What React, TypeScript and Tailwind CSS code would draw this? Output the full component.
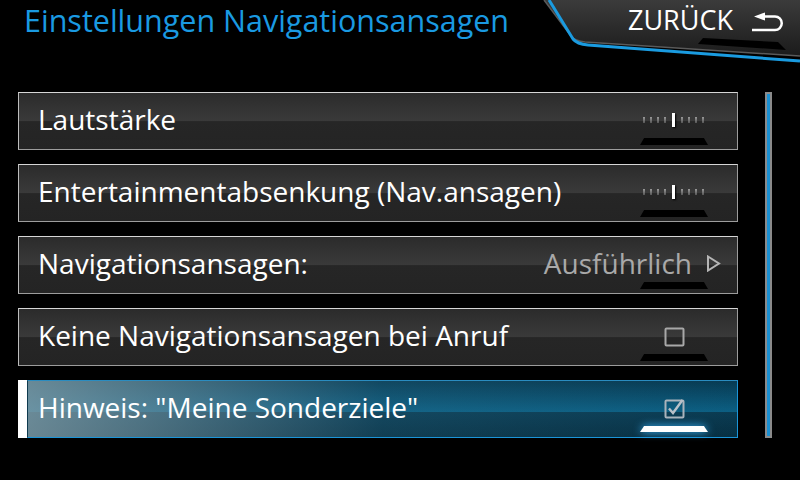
import { ReactNode } from 'react';

const FONT = "font-['Open_Sans',_'DejaVu_Sans',_sans-serif]";

function Notch({ active }: { active?: boolean }) {
  if (active) {
    return (
      <div className="absolute right-[29px] bottom-[5px] drop-shadow-[0_0_4px_#39b6ff]">
        <div className="w-[68px] h-[6px] bg-white [clip-path:polygon(6%_0,94%_0,100%_100%,0_100%)]" />
      </div>
    );
  }
  return (
    <div className="absolute right-[29px] bottom-[4px] w-[68px] h-[7px] bg-black [clip-path:polygon(6%_0,94%_0,100%_100%,0_100%)]" />
  );
}

function SliderIcon() {
  const ticks = [0, 1, 2, 3];
  return (
    <div className="flex items-center gap-[5px]">
      {ticks.map(i => (
        <div key={'l' + i} className="w-[2px] h-[6px] bg-gradient-to-b from-[#9a9a9a] to-[#555]" />
      ))}
      <div className="w-[3px] h-[14px] mx-[1px] bg-white shadow-[1px_1px_2px_#000]" />
      {ticks.map(i => (
        <div key={'r' + i} className="w-[2px] h-[6px] bg-gradient-to-b from-[#9a9a9a] to-[#555]" />
      ))}
    </div>
  );
}

function CheckBox({ checked }: { checked?: boolean }) {
  return (
    <svg width="24" height="22" viewBox="0 0 24 22" className="mr-[49px] mb-[2px]">
      <rect x="1.5" y="3.5" width="18" height="17" rx="1" fill="none" stroke={checked ? '#aab3bb' : '#a8a8a8'} strokeWidth="2" />
      {checked && <path d="M5 11.5 L9 16 L18.5 3" fill="none" stroke="#b8c0c8" strokeWidth="2.4" />}
    </svg>
  );
}

function Row({ label, right, active }: { label: string; right?: ReactNode; active?: boolean }) {
  if (active) {
    return (
      <div className="flex h-[58px]">
        <div className="w-[9px] bg-white" />
        <div className="relative flex-1 flex items-center border border-[#1b95d8] border-l-[#0f3a4e] border-t-[#2a8cc0] bg-[linear-gradient(to_bottom,#073a52_0%,#0c5f83_55%,#0a3b52_56%,#072f42_100%)]">
          <div className="absolute inset-0 bg-gradient-to-r from-[#8aa4ae]/75 via-[#3a7a96]/20 to-transparent" />
          <span className="relative pl-[10px] pb-[4px] text-[28px] leading-[38px] text-white">{label}</span>
          <div className="relative ml-auto flex items-center">{right}</div>
          <Notch active />
        </div>
      </div>
    );
  }
  return (
    <div className="relative flex items-center h-[58px] border border-[#9c9c9c] border-t-[#d6d6d6] border-l-[#bdbdbd] bg-[linear-gradient(to_bottom,#2b2b2b_0%,#3a3a3a_50%,#262626_51%,#242424_100%)]">
      <span className="pl-[19px] pb-[4px] text-[28px] leading-[38px] text-white">{label}</span>
      <div className="ml-auto flex items-center">{right}</div>
      <Notch />
    </div>
  );
}

function HeaderShape() {
  return (
    <svg className="absolute top-0 right-0" width="260" height="70" viewBox="0 0 260 70">
      <defs>
        <linearGradient id="panel" x1="0" y1="0" x2="0" y2="1">
          <stop offset="0" stopColor="#3b3b3b" />
          <stop offset="1" stopColor="#1b1b1b" />
        </linearGradient>
      </defs>
      <path d="M4 0 L31 36 Q35 41 45 42 L260 56 L260 0 Z" fill="url(#panel)" />
      <path d="M4 0 L31 36 Q35 41 45 42 L260 56" fill="none" stroke="#5a5a5a" strokeWidth="1.5" />
      <path d="M158 44 L163 38 L238 42 L246 50 Z" fill="#000" />
      <path d="M9 0 L33 39 Q37 44 48 45 L260 61" fill="none" stroke="#1a9be0" strokeWidth="3" />
    </svg>
  );
}

export default function App() {
  return (
    <div className={`w-[800px] h-[480px] bg-black overflow-hidden ${FONT}`}>
      <header className="relative h-[92px] flex items-start">
        <h1 className="pl-[24px] pt-[0px] text-[30.5px] leading-[40px] text-[#1a9ae2]">
          Einstellungen Navigationsansagen
        </h1>
        <HeaderShape />
        <div className="relative ml-auto mr-[17px] mt-[3px] flex items-center gap-[18px]">
          <span className="text-[27px] leading-[34px] text-white">ZURÜCK</span>
          <svg width="32" height="22" viewBox="0 0 32 22" className="mt-[4px]">
            <path d="M3 5.5 L14 1.5 L14 9.5 Z" fill="#fff" />
            <path d="M13 5.5 H24 A6.75 6.75 0 0 1 24 19 H1" fill="none" stroke="#fff" strokeWidth="2.5" />
          </svg>
        </div>
      </header>

      <div className="flex">
        <div className="ml-[18px] w-[720px] flex flex-col gap-[14px]">
          <Row label="Lautstärke" right={<div className="mr-[33px] mb-[2px]"><SliderIcon /></div>} />
          <Row label="Entertainmentabsenkung (Nav.ansagen)" right={<div className="mr-[33px] mb-[2px]"><SliderIcon /></div>} />
          <Row
            label="Navigationsansagen:"
            right={
              <div className="flex items-center mr-[16px] gap-[14px] pb-[4px]">
                <span className="text-[28px] leading-[38px] text-[#a9a9a9]">Ausführlich</span>
                <svg width="15" height="17" viewBox="0 0 15 17">
                  <path d="M2 1.5 L13 8.5 L2 15.5 Z" fill="none" stroke="#b5b5b5" strokeWidth="2" />
                </svg>
              </div>
            }
          />
          <Row label="Keine Navigationsansagen bei Anruf" right={<CheckBox />} />
          <Row label={'Hinweis: "Meine Sonderziele"'} right={<CheckBox checked />} active />
        </div>
        <div className="ml-[27px] w-[7px] h-[346px] border-2 border-[#8a8a8a] bg-[#1a8fd2]" />
      </div>
    </div>
  );
}
